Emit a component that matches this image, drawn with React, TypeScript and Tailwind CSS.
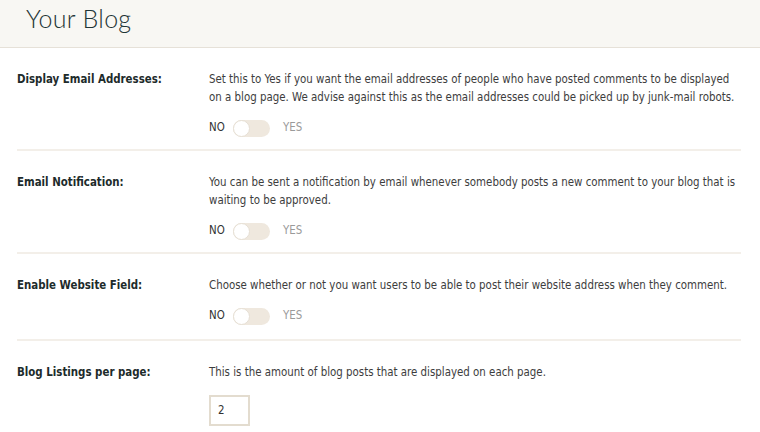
const rows = [
  {
    label: "Display Email Addresses:",
    text: "Set this to Yes if you want the email addresses of people who have posted comments to be displayed on a blog page. We advise against this as the email addresses could be picked up by junk-mail robots.",
    kind: "toggle",
  },
  {
    label: "Email Notification:",
    text: "You can be sent a notification by email whenever somebody posts a new comment to your blog that is waiting to be approved.",
    kind: "toggle",
  },
  {
    label: "Enable Website Field:",
    text: "Choose whether or not you want users to be able to post their website address when they comment.",
    kind: "toggle",
  },
  {
    label: "Blog Listings per page:",
    text: "This is the amount of blog posts that are displayed on each page.",
    kind: "input",
  },
];

const Toggle = () => (
  <div className="flex items-center mt-3 h-5 text-[11.4px]">
    <span className="text-[#333] w-[24px]">NO</span>
    <span className="relative w-[37px] h-[17px] rounded-full bg-[#efe8de]">
      <span className="absolute left-0 top-0 w-[17px] h-[17px] rounded-full bg-white border border-[#e6dfd4]" />
    </span>
    <span className="ml-[13px] text-[#9a9a9a]">YES</span>
  </div>
);

export default function App() {
  return (
    <div className="w-[760px] h-[432px] overflow-hidden bg-white font-['DejaVu_Sans_Condensed',sans-serif]">
      <div className="h-[48px] bg-[#f8f7f3] border-b border-[#e6e1d8] px-[26px] pt-[3px]">
        <h1 className="font-['Lato',sans-serif] font-light text-[25px] leading-[30px] text-[#1f3536] tracking-[0.3px]">
          Your Blog
        </h1>
      </div>
      <div className="px-[17px] pr-[19px]">
        {rows.map((r, i) => (
          <div
            key={r.label}
            className={`flex pt-[22px] ${i === 2 ? "pb-[13px]" : "pb-[11px]"} ${i < rows.length - 1 ? "border-b-2 border-[#f3efe9]" : ""}`}
          >
            <div className="w-[192px] shrink-0 text-[11.4px] font-bold text-[#1d2b2b] leading-[18px]">
              {r.label}
            </div>
            <div className="flex-1 pr-[4px]">
              <p className="text-[11.4px] leading-[18px] text-[#3d3d3d]">{r.text}</p>
              {r.kind === "toggle" ? (
                <Toggle />
              ) : (
                <div className="mt-[14px] w-[41px] h-[31px] border-2 border-[#e3dccf] flex items-center pl-[7px] text-[11.4px] text-[#333]">
                  2
                </div>
              )}
            </div>
          </div>
        ))}
      </div>
    </div>
  );
}
